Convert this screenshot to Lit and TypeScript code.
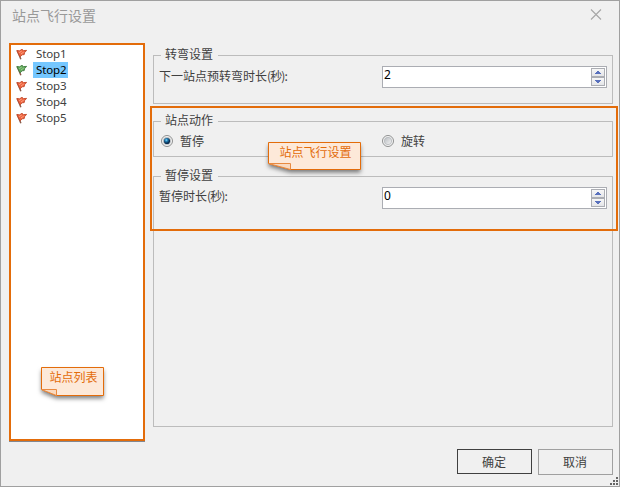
import { LitElement, html, svg, css } from "lit";
import { customElement, property, state } from "lit/decorators.js";
import { classMap } from "lit/directives/class-map.js";

@customElement("stop-flag")
class StopFlag extends LitElement {
  @property({ type: Boolean }) active = false;
  static styles = css`
    :host { display: block; width: 12px; height: 12px; }
    svg { display: block; }
  `;
  render() {
    const dark = this.active ? "#3f7a40" : "#c2482a";
    const fill = this.active ? "#62a95c" : "#ee6540";
    const light = this.active ? "#9bd08e" : "#ffa283";
    return html`<svg width="12" height="12" viewBox="0 0 12 12">
      <path d="M1.2 2.5 4.9 11.3" stroke="#8a5a48" stroke-width="1.5" />
      <path d="M.8 2.6 3.6 2.8 6 1.3 7.4 2.6 10.6 2.4 8.6 4.6 8.2 6.6 6.2 6.8 4 8.8Z" fill=${fill} stroke=${dark} stroke-width=".9" />
      <path d="M3.2 4.6 5.8 3M5 6 7.8 4" stroke=${light} stroke-width="1" />
    </svg>`;
  }
}

@customElement("group-box")
class GroupBox extends LitElement {
  @property() label = "";
  static styles = css`
    :host { display: block; box-sizing: border-box; border: 1px solid #bcbcbc; }
    .legend {
      width: max-content; height: 18px; line-height: 16px; margin: -10px 0 0 7px;
      padding: 0 5px 0 4px; background: #f0f0f0;
    }
  `;
  render() {
    return html`<div class="legend">${this.label}</div><slot></slot>`;
  }
}

@customElement("spin-box")
class SpinBox extends LitElement {
  @property({ type: Number }) value = 0;
  static styles = css`
    :host {
      display: flex; box-sizing: border-box; width: 225px; height: 22px;
      border: 1px solid #abadb3; background: #fff; color: #000;
    }
    .value { flex: 1; padding-left: 1px; line-height: 16px; font-family: "Noto Sans", sans-serif; font-size: 12px; }
    .steps { width: 14px; margin: 1px 1px 1px 0; display: flex; flex-direction: column; }
    .step {
      box-sizing: border-box; height: 9px; border: 1px solid #abadb3; background: linear-gradient(#f7f7f7, #e4e5e8);
      display: flex; align-items: center; justify-content: center;
    }
    svg { display: block; }
  `;
  render() {
    return html`<div class="value">${this.value}</div>
      <div class="steps">
        <div class="step"><svg width="6" height="3"><path d="M2 0h2v1h1v1h1v1H0V2h1V1h1z" fill="#5870bd" /></svg></div>
        <div class="step"><svg width="6" height="3"><path d="M0 0h6v1H5v1H4v1H2V2H1V1H0z" fill="#5870bd" /></svg></div>
      </div>`;
  }
}

@customElement("radio-option")
class RadioOption extends LitElement {
  @property() label = "";
  @property({ type: Boolean }) checked = false;
  static styles = css`
    :host { display: flex; align-items: center; gap: 7px; }
    svg { display: block; }
  `;
  render() {
    return html`<svg width="12" height="12" viewBox="0 0 12 12">
        <defs><radialGradient id="dot" cx=".4" cy=".35"><stop offset="0" stop-color="#8fe0ff" /><stop offset=".4" stop-color="#2586bd" /><stop offset="1" stop-color="#092d50" /></radialGradient>
        <linearGradient id="well" x2="1" y2="1"><stop offset="0" stop-color="#b8bcc0" /><stop offset="1" stop-color="#f4f4f4" /></linearGradient></defs>
        <circle cx="6" cy="6" r="5.5" fill="#f6f6f6" stroke="#8e8f8f" />
        <circle cx="6" cy="6" r="3.7" fill="url(#well)" stroke="#b4b8bb" stroke-width=".8" />
        ${this.checked ? svg`<circle cx="6" cy="6" r="3.1" fill="url(#dot)" />` : ""}
      </svg><span>${this.label}</span>`;
  }
}

@customElement("note-callout")
class NoteCallout extends LitElement {
  @property() label = "";
  @property({ type: Number }) w = 0;
  @property({ type: Number }) h = 0;
  @property({ type: Number }) fold = 0;
  static styles = css`
    :host { display: grid; color: #e36c0a; }
    svg, span { grid-area: 1 / 1; }
    svg { display: block; overflow: visible; }
    .shade { filter: drop-shadow(0 3px 2px rgba(0, 0, 0, 0.5)); }
    span { z-index: 1; line-height: 19px; justify-self: center; padding-left: 2px; }
  `;
  render() {
    const { w, h, fold } = this;
    const sheet = `M.5 .5H${w - 0.5}V${h - 0.5}H${fold - 1}L.5 ${h - 6.5}Z`;
    return html`<svg width=${w} height=${h}>
        <path class="shade" d=${sheet} fill="#fde9d9" />
        <path d=${sheet} fill="#fde9d9" stroke="#e36c0a" />
        <path d="M.5 ${h - 6.5}H${fold - 0.5}V${h - 0.5}Z" fill="#f9d9bf" stroke="#e98a40" />
      </svg><span>${this.label}</span>`;
  }
}

@customElement("app-root")
class AppRoot extends LitElement {
  @state() private stops = ["Stop1", "Stop2", "Stop3", "Stop4", "Stop5"];
  @state() private selected = "Stop2";

  static styles = css`
    :host {
      display: flex; flex-direction: column; position: relative; box-sizing: border-box;
      width: 620px; height: 487px; border: 1px solid #a0a0a0; background: #f0f0f0;
      font: 12px "Noto Sans CJK SC", sans-serif; color: #404040; overflow: hidden;
    }
    header { display: flex; height: 42px; box-sizing: border-box; padding: 4px 17px 0 11px; justify-content: space-between; }
    h1 { margin: 0; font-size: 14px; font-weight: 400; line-height: 20px; color: #999; }
    .close { display: block; margin-top: 4px; }
    main { display: flex; height: 399px; padding: 0 6px 0 8px; }
    .list {
      box-sizing: border-box; width: 136px; height: 398px; border: 2px solid #e36c0a; background: #fff;
      box-shadow: 0 1px #828790; padding: 1px 0 0 5px; font: 11.5px "Noto Sans", sans-serif;
    }
    .stop { display: flex; align-items: center; height: 16px; gap: 5px; }
    .name { height: 16px; line-height: 16px; padding: 0 1px 0 3px; letter-spacing: -.1px; }
    .selected .name { background: #75c7ff; color: #000; }
    .settings { display: flex; flex-direction: column; width: 460px; margin-left: 8px; padding-top: 12px; }
    .turn { height: 49px; }
    .action { height: 36px; margin-top: 17px; }
    .pause { height: 251px; margin-top: 19px; }
    .field { display: grid; grid-template-columns: 223px 225px; padding: 2px 0 0 5px; }
    .field .label { line-height: 19px; }
    .unit { letter-spacing: -.9px; }
    .pause .label { line-height: 18px; }
    .radios { display: grid; grid-template-columns: 221px auto; padding: 2px 0 0 7px; line-height: 18px; }
    .frame {
      position: absolute; left: 149px; top: 105px; box-sizing: border-box; width: 468px; height: 125px;
      border: 2px solid #e36c0a; pointer-events: none;
    }
    .note-settings { position: absolute; left: 267px; top: 141px; }
    .note-list { position: absolute; left: 40px; top: 366px; }
    footer { display: flex; justify-content: flex-end; gap: 6px; padding: 7px 6px 0 0; }
    button { box-sizing: border-box; width: 75px; height: 26px; padding: 0 1px 1px 0; border: 1px solid #a0a0a0; background: #f0f0f0; font: inherit; color: #404040; }
    .ok { height: 25px; border-color: #404040; }
    .grip { position: absolute; right: 0; bottom: 0; }
  `;

  render() {
    return html`
      <header>
        <h1>站点飞行设置</h1>
        <svg class="close" width="12" height="11" viewBox="0 0 12 11"><path d="M1 .5 11 10.5M11 .5 1 10.5" stroke="#a6a6a6" stroke-width="1.1" /></svg>
      </header>
      <main>
        <div class="list">
          ${this.stops.map((name) => html`
            <div class=${classMap({ stop: true, selected: name === this.selected })} @click=${() => (this.selected = name)}>
              <stop-flag ?active=${name === this.selected}></stop-flag><span class="name">${name}</span>
            </div>`)}
        </div>
        <div class="settings">
          <group-box class="turn" label="转弯设置">
            <div class="field"><span class="label">下一站点预转弯时长<span class="unit">(秒):</span></span><spin-box .value=${2}></spin-box></div>
          </group-box>
          <group-box class="action" label="站点动作">
            <div class="radios"><radio-option label="暂停" checked></radio-option><radio-option label="旋转"></radio-option></div>
          </group-box>
          <group-box class="pause" label="暂停设置">
            <div class="field"><span class="label">暂停时长<span class="unit">(秒):</span></span><spin-box .value=${0}></spin-box></div>
          </group-box>
        </div>
      </main>
      <footer><button class="ok">确定</button><button>取消</button></footer>
      <svg class="grip" width="9" height="9"><path d="M6 0h2v2H6zM3 3h2v2H3zM6 3h2v2H6zM0 6h2v2H0zM3 6h2v2H3zM6 6h2v2H6z" fill="#666" /></svg>
      <div class="frame"></div>
      <note-callout class="note-settings" label="站点飞行设置" .w=${93} .h=${28} .fold=${23}></note-callout>
      <note-callout class="note-list" label="站点列表" .w=${63} .h=${29} .fold=${16}></note-callout>
    `;
  }
}
